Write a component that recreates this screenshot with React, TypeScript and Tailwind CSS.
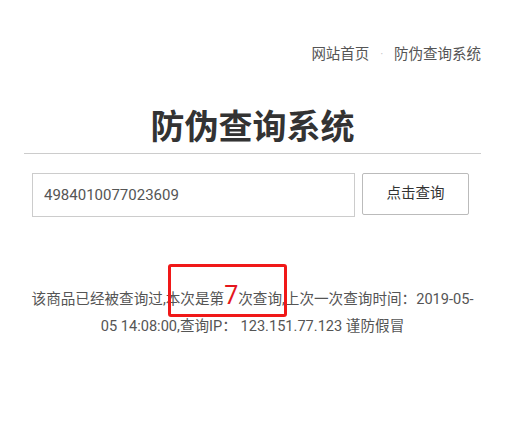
export default function App() {
  return (
    <div
      className="relative w-[505px] h-[441px] bg-white text-[#555]"
      style={{ fontFamily: 'Roboto, "Noto Sans CJK SC", sans-serif' }}
    >
      <div className="px-[24px]">
        <div className="flex justify-end items-center pt-[44px] text-[14.5px] leading-[22px] text-[#555]">
          <span>网站首页</span>
          <span className="px-[11px] text-[#bbb] text-[10px]">·</span>
          <span>防伪查询系统</span>
        </div>
        <h1 className="mt-[41px] text-center text-[34px] leading-[40px] font-bold text-[#333]">防伪查询系统</h1>
        <div className="mt-[6px] h-px bg-[#ccc]" />
        <div className="mt-[19px] flex gap-[7px] px-[8px]">
          <input
            readOnly
            value="4984010077023609"
            className="w-[323px] h-[44px] border border-[#ccc] px-[11px] text-[15px] text-[#555] outline-none"
          />
          <button className="w-[107px] h-[42px] border border-[#bbb] rounded-[2px] text-[14.5px] text-[#333] bg-white">
            点击查询
          </button>
        </div>
        <p className="mt-[69px] text-center text-[14.6px] leading-[27px] text-[#555]">
          该商品已经被查询过,本次是第<span className="text-[25px] text-[#e4161d] leading-[20px]">7</span>次查询,上次一次查询时间：2019-05-05 14:08:00,查询IP： 123.151.77.123 谨防假冒
        </p>
      </div>
      <div className="absolute left-[168px] top-[264px] w-[119px] h-[53px] border-[3px] border-[#f01818] rounded-[3px]" />
    </div>
  );
}
